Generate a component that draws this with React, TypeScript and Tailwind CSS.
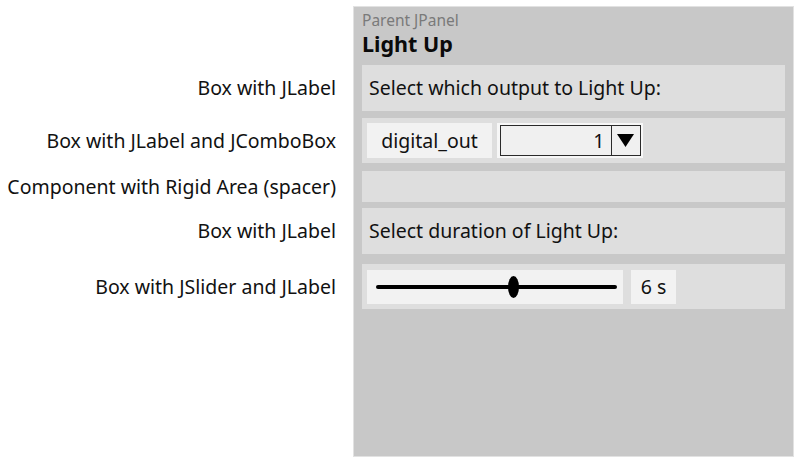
const font = { fontFamily: '"Noto Sans", "Open Sans", sans-serif' };

export default function App() {
  return (
    <div
      className="flex h-[462px] w-[800px] overflow-hidden bg-white text-[#111]"
      style={font}
    >
      <div className="flex w-[353px] flex-col items-end pr-[17px] pt-[65px] text-[19.5px] leading-none">
        <RowLabel h="h-[46px]">Box with JLabel</RowLabel>
        <RowLabel h="mt-[7px] h-[45px]">Box with JLabel and JComboBox</RowLabel>
        <RowLabel h="mt-[8px] h-[31px]">Component with Rigid Area (spacer)</RowLabel>
        <RowLabel h="mt-[6px] h-[46px]">Box with JLabel</RowLabel>
        <RowLabel h="mt-[10px] h-[45px]">Box with JSlider and JLabel</RowLabel>
      </div>

      <div className="mt-[6px] flex h-[451px] w-[441px] flex-col border border-[#e2e2e2] bg-[#c8c8c8] px-[8px]">
        <div className="h-[58px]">
          <div className="pt-[4px] text-[15.5px] leading-[19px] text-[#7a7a7a]">Parent JPanel</div>
          <div className="text-[21.5px] font-bold leading-[28px] text-[#0a0a0a]">Light Up</div>
        </div>

        <div className="flex h-[46px] items-center bg-[#dedede] px-[7px] text-[19.5px]">
          Select which output to Light Up:
        </div>

        <div className="mt-[7px] flex h-[45px] items-center gap-[5px] bg-[#dedede] px-[5px]">
          <div className="flex h-[35px] w-[125px] items-center justify-center bg-[#f2f2f2] text-[19.5px]">
            digital_out
          </div>
          <div className="flex h-[35px] w-[146px] items-center justify-center bg-[#f7f7f7]">
            <div className="flex h-[31px] w-[141px] border border-[#2a2a2a] bg-[#f0f0f0]">
              <div className="flex flex-1 items-center justify-end pr-[6px] text-[19.5px]">1</div>
              <div className="flex w-[29px] items-center justify-center border-l border-[#2a2a2a]">
                <svg width="17" height="13" viewBox="0 0 17 13">
                  <polygon points="0,0 17,0 8.5,13" fill="#000" />
                </svg>
              </div>
            </div>
          </div>
        </div>

        <div className="mt-[8px] h-[31px] bg-[#dedede]" />

        <div className="mt-[6px] flex h-[46px] items-center bg-[#dedede] px-[7px] text-[19.5px]">
          Select duration of Light Up:
        </div>

        <div className="mt-[10px] flex h-[45px] items-center gap-[8px] bg-[#dedede] px-[5px]">
          <div className="relative flex h-[34px] w-[256px] items-center bg-[#f2f2f2] pl-[9px] pr-[6px]">
            <div className="h-[4px] w-full rounded-full bg-black" />
            <div className="absolute left-[141px] top-[6px] h-[22px] w-[11px] rounded-[50%] bg-black" />
          </div>
          <div className="flex h-[34px] w-[45px] items-center justify-center bg-[#f2f2f2] text-[19.5px]">
            6 s
          </div>
        </div>
      </div>
    </div>
  );
}

function RowLabel({ h, children }: { h: string; children: React.ReactNode }) {
  return <div className={`flex items-center whitespace-nowrap ${h}`}>{children}</div>;
}
